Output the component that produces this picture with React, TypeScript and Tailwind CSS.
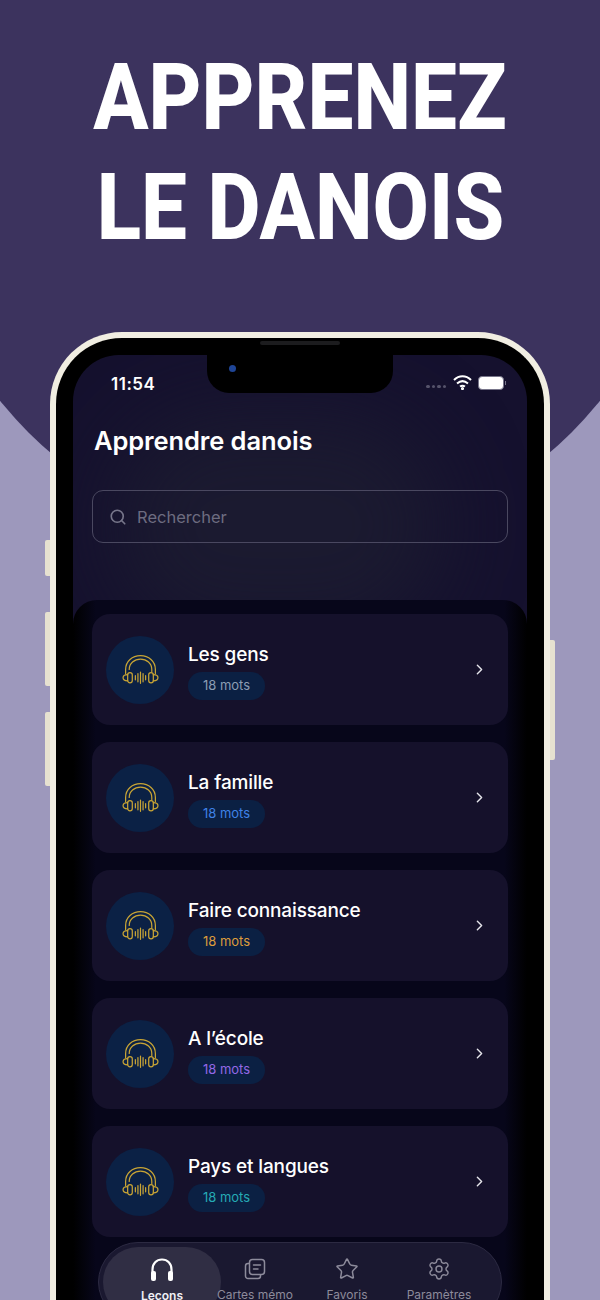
import { ChevronRight, Search, Star, Settings } from "lucide-react";

const lessons = [
  { title: "Les gens", color: "text-[#8c9db3]" },
  { title: "La famille", color: "text-[#3f82e6]" },
  { title: "Faire connaissance", color: "text-[#dd9c3c]" },
  { title: "A l’école", color: "text-[#9468e6]" },
  { title: "Pays et langues", color: "text-[#25abb5]" },
];

function HeadsetIcon() {
  return (
    <svg width="39" height="39" viewBox="0 -2 38 38" fill="none" stroke="#c9a535" strokeWidth="1.2" strokeLinecap="round">
      <path d="M4.5 21 V17 C4.5 9 11 3.5 19 3.5 C27 3.5 33.5 9 33.5 17 V21" />
      <path d="M8 17 C8 11 13 7 19 7 C25 7 30 11 30 17 V19" />
      <rect x="6.5" y="20" width="4.5" height="10" rx="2.2" />
      <rect x="27" y="20" width="4.5" height="10" rx="2.2" />
      <path d="M6.5 22 C3 22 2 23 2 25 C2 27 3 28 6.5 28" />
      <path d="M31.5 22 C35 22 36 23 36 25 C36 27 35 28 31.5 28" />
      <path d="M14 23 V27 M16.5 21 V29 M19 19.5 V30.5 M21.5 21 V29 M24 23 V27" />
    </svg>
  );
}

function LessonCard({ title, color }: { title: string; color: string }) {
  return (
    <div className="flex h-[111px] items-center rounded-[18px] bg-[#15112b] pl-[14px] pr-[20px]">
      <div className="flex h-[68px] w-[68px] shrink-0 items-center justify-center rounded-full bg-[#0b2145]">
        <HeadsetIcon />
      </div>
      <div className="ml-[14px] flex flex-1 flex-col items-start pt-[3px]">
        <div className="text-[19px] leading-[26px] font-medium tracking-[-0.15px] text-white">{title}</div>
        <div className={`mt-[4px] flex h-[28px] w-[77px] items-center justify-center rounded-full bg-[#0b2043] text-[13px] ${color}`}>
          18 mots
        </div>
      </div>
      <ChevronRight size={17} className="text-[#e4e4ea]" />
    </div>
  );
}

function TabBar() {
  return (
    <div className="absolute left-[25px] top-[887px] flex h-[80px] w-[404px] rounded-[40px] border border-[#2c2a42] bg-[#1a1830] p-[4px]">
      <div className="relative flex w-[118px] flex-col items-center rounded-[36px] bg-[#302e44] pt-[10px]">
        <svg width="26" height="26" viewBox="0 0 26 26" fill="none">
          <path d="M3.5 17 V12.5 C3.5 6.5 7.5 2.5 13 2.5 C18.5 2.5 22.5 6.5 22.5 12.5 V17" stroke="#fff" strokeWidth="2.2" />
          <rect x="2" y="14" width="5" height="10" rx="2" fill="#fff" />
          <rect x="19" y="14" width="5" height="10" rx="2" fill="#fff" />
        </svg>
        <div className="mt-[4px] text-[12px] font-semibold text-[#f0f0f5]">Leçons</div>
      </div>
      <div className="relative -ml-[12px] flex w-[92px] flex-col items-center pt-[10px]">
        <svg width="24" height="24" viewBox="0 0 24 24" fill="none" stroke="#8d8b9b" strokeWidth="1.5" strokeLinejoin="round">
          <rect x="6.5" y="2.5" width="15" height="15" rx="3" />
          <path d="M6.5 6.5 H5 A2.5 2.5 0 0 0 2.5 9 V19 A2.5 2.5 0 0 0 5 21.5 H15 A2.5 2.5 0 0 0 17.5 19 V17.5" />
          <path d="M10.5 8 H17.5 M10.5 12 H15" strokeLinecap="round" />
        </svg>
        <div className="mt-[5px] whitespace-nowrap text-[12px] text-[#8d8b9b]">Cartes mémo</div>
      </div>
      <div className="flex w-[92px] flex-col items-center pt-[10px]">
        <Star size={24} strokeWidth={1.5} className="text-[#8d8b9b]" />
        <div className="mt-[5px] text-[12px] text-[#8d8b9b]">Favoris</div>
      </div>
      <div className="flex w-[92px] flex-col items-center pt-[10px]">
        <Settings size={24} strokeWidth={1.4} className="text-[#8d8b9b]" />
        <div className="mt-[5px] text-[12px] text-[#8d8b9b]">Paramètres</div>
      </div>
    </div>
  );
}

export default function App() {
  return (
    <div className="relative h-[1300px] w-[600px] overflow-hidden bg-[#9d98bc] font-['Inter',sans-serif]">
      {/* Big circle behind the heading */}
      <div className="absolute left-[-84px] top-[-223px] h-[768px] w-[768px] rounded-full bg-[#3c335e]" />

      <div className="relative flex h-[332px] flex-col items-center pt-[43px] font-['Roboto',sans-serif] text-[93px] leading-[110px] font-extrabold text-white">
        <div className="scale-x-[0.88] whitespace-nowrap">APPRENEZ</div>
        <div className="scale-x-[0.88] whitespace-nowrap">LE DANOIS</div>
      </div>

      {/* Side buttons */}
      <div className="absolute left-[45px] top-[540px] h-[36px] w-[6px] rounded-l-[2px] bg-[#e6e1d0]" />
      <div className="absolute left-[45px] top-[612px] h-[74px] w-[6px] rounded-l-[2px] bg-[#e6e1d0]" />
      <div className="absolute left-[45px] top-[712px] h-[74px] w-[6px] rounded-l-[2px] bg-[#e6e1d0]" />
      <div className="absolute left-[549px] top-[640px] h-[120px] w-[6px] rounded-r-[2px] bg-[#e6e1d0]" />

      {/* Phone */}
      <div className="relative mx-[50px] h-[1000px] rounded-t-[72px] border-[6px] border-b-0 border-[#f1eee2] bg-black px-[17px] pt-[17px]">
        <div className="absolute left-[204px] top-[3px] h-[4px] w-[80px] rounded-full bg-[#1c1c1e]" />

        <div className="relative h-[980px] overflow-hidden rounded-t-[46px] bg-[#15112e]">
          <div className="absolute left-[40px] top-[60px] h-[220px] w-[330px] rounded-full bg-[#1b1a30] blur-2xl" />

          {/* Notch */}
          <div className="absolute left-[134px] top-0 h-[38px] w-[186px] rounded-b-[22px] bg-black">
            <div className="absolute left-[22px] top-[10px] h-[7px] w-[7px] rounded-full bg-[#1f4596]" />
          </div>

          <div className="relative flex h-[58px] items-start justify-between pl-[38px] pr-[21px] pt-[18px]">
            <div className="text-[17px] leading-[22px] font-semibold tracking-[0.5px] text-white">11:54</div>
            <div className="flex items-center gap-[6px] pt-[2px]">
              <div className="mt-[8px] mr-[1px] flex gap-[2px]">
                <div className="h-[3.5px] w-[3.5px] rounded-full bg-[#55536a]" />
                <div className="h-[3.5px] w-[3.5px] rounded-full bg-[#55536a]" />
                <div className="h-[3.5px] w-[3.5px] rounded-full bg-[#55536a]" />
                <div className="h-[3.5px] w-[3.5px] rounded-full bg-[#55536a]" />
              </div>
              <svg width="19" height="15" viewBox="0 0 19 15" fill="none" stroke="#fff" strokeWidth="2">
                <path d="M1 5 C6 0 13 0 18 5" />
                <path d="M4 8.5 C7.5 5.5 11.5 5.5 15 8.5" />
                <path d="M7 11.5 C8.5 10.5 10.5 10.5 12 11.5" />
                <circle cx="9.5" cy="13.5" r="0.6" fill="#fff" />
              </svg>
              <div className="flex items-center">
                <div className="h-[14px] w-[26px] rounded-[4px] border border-[#77758a] bg-white" />
                <div className="ml-[1px] h-[4px] w-[1px] bg-[#77758a]" />
              </div>
            </div>
          </div>

          <div className="relative px-[21px] pt-[12px] text-[25.5px] leading-[32px] font-semibold tracking-[-0.1px] text-white">Apprendre danois</div>

          <div className="relative mx-[19px] mt-[33px] flex h-[53px] items-center gap-[10px] rounded-[11px] border border-[#4a4860] px-[16px]">
            <Search size={18} strokeWidth={2.2} className="text-[#77768a]" />
            <div className="pt-[1px] text-[16.5px] text-[#6d6c80]">Rechercher</div>
          </div>

          <div className="relative mt-[57px] flex h-[700px] flex-col gap-[17px] rounded-t-[24px] bg-[linear-gradient(90deg,#000_0%,#07061a_5%,#07061a_95%,#000_100%)] px-[19px] pt-[14px]">
            {lessons.map((l) => (
              <LessonCard key={l.title} title={l.title} color={l.color} />
            ))}
          </div>

          <TabBar />
        </div>
      </div>
    </div>
  );
}
